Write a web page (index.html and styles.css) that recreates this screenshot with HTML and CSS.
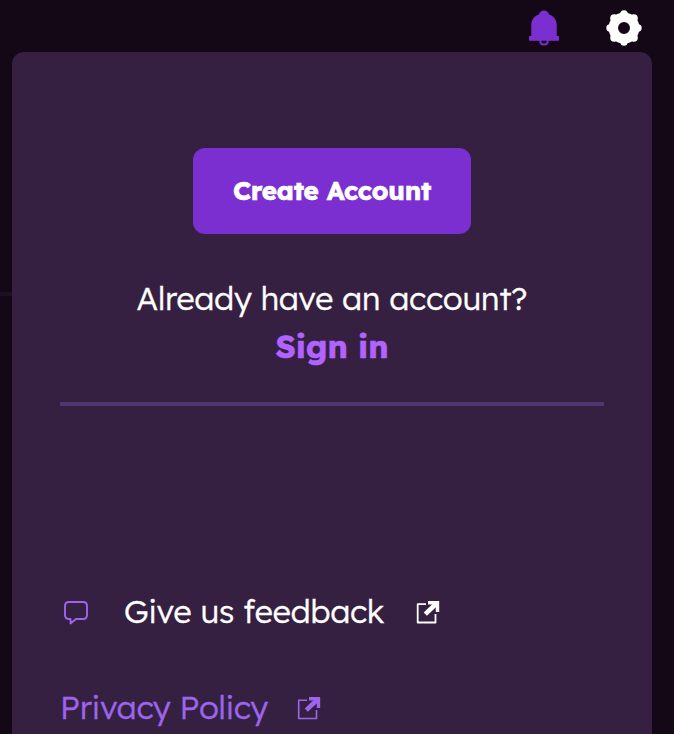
FILE: index.html
```html
<!DOCTYPE html>
<html lang="en">
<head>
<meta charset="utf-8">
<title>Account menu</title>
<link rel="stylesheet" href="styles.css">
</head>
<body>
<header class="topbar">
  <svg class="bell" viewBox="0 0 32 36" aria-hidden="true">
    <path fill="currentColor" d="M16 .5c2.900 0 4.600 1.700 5 4C26 6 28.700 10 28.700 15v11H31v4.800H1V26h2.300V15c0-5 2.700-9 7.700-10.500.4-2.300 2.100-4 5-4z"/>
    <path fill="none" stroke="currentColor" stroke-width="2" d="M12 30c0 3 1.500 4.500 4 4.500s4-1.500 4-4.500"/>
  </svg>
  <svg class="gear" viewBox="0 0 36 36" aria-hidden="true">
    <circle cx="18" cy="18" r="10.700" fill="none" stroke="currentColor" stroke-width="9.400"/>
    <g fill="currentColor"><circle cx="18" cy="4" r="3.700"/><circle cx="27.800" cy="8.200" r="4"/><circle cx="32" cy="18" r="3.700"/><circle cx="27.800" cy="27.800" r="4"/><circle cx="18" cy="32" r="3.700"/><circle cx="8.200" cy="27.800" r="4"/><circle cx="4" cy="18" r="3.700"/><circle cx="8.200" cy="8.200" r="4"/></g>
  </svg>
</header>
<main class="panel">
  <section class="account">
    <button class="create"><span>Create Account</span></button>
    <p class="question">Already have an account?</p>
    <a class="signin">Sign in</a>
  </section>
  <nav class="links">
    <a class="link feedback">
      <svg class="bubble" viewBox="0 0 26 26" aria-hidden="true"><path fill="none" stroke="currentColor" stroke-width="1.900" stroke-linejoin="round" d="M6 2h14q4 0 4 4v9q0 4-4 4h-7L7.500 23.500V19H6q-4 0-4-4V6q0-4 4-4z"/></svg>
      <span class="feedback-text">Give us feedback</span>
      <svg class="external" viewBox="0 0 24 24" aria-hidden="true"><path fill="none" stroke="currentColor" stroke-width="1.800" stroke-linejoin="round" d="M10 4.200H1.700v18.300H19.500V14"/><path fill="none" stroke="currentColor" stroke-width="3.400" d="M12 2.700h9.500v9.300"/><path stroke="currentColor" stroke-width="4.600" d="M9.300 14.200L20.500 3.500"/></svg>
    </a>
    <a class="link privacy">
      <span class="privacy-text">Privacy Policy</span>
      <svg class="external" viewBox="0 0 24 24" aria-hidden="true"><path fill="none" stroke="currentColor" stroke-width="1.600" stroke-linejoin="round" d="M10 4.200H1.700v18.300H19.500V14"/><path fill="none" stroke="currentColor" stroke-width="3.400" d="M12 2.700h9.500v9.300"/><path stroke="currentColor" stroke-width="4.600" d="M9.300 14.200L20.500 3.500"/></svg>
    </a>
  </nav>
</main>
</body>
</html>
```
FILE: styles.css
```css
* { box-sizing: border-box; }
body {
  margin: 0;
  height: 734px;
  overflow: hidden;
  background: linear-gradient(#1c1020, #1c1020) 0 292px / 12px 4px no-repeat, #140817;
  color: #fff;
  font-family: Lexend, Lato, sans-serif;
  -webkit-text-stroke: 0.4px currentColor;
}
.topbar {
  display: flex;
  justify-content: flex-end;
  align-items: flex-start;
  gap: 46px;
  height: 52px;
  padding: 10px 32px 0 0;
}
.bell { width: 32px; height: 36px; color: #7b2fd0; }
.gear { width: 36px; height: 36px; }
.panel {
  width: 640px;
  height: 700px;
  margin-left: 12px;
  padding: 96px 48px 0;
  border-radius: 12px;
  background: #362041;
}
.account {
  display: flex;
  flex-direction: column;
  align-items: center;
  width: 544px;
  height: 258px;
  border-bottom: 4px solid #52376f;
}
.create {
  width: 278px;
  height: 86px;
  padding: 0;
  border: 0;
  border-radius: 12px;
  background: #7b2fd0;
  color: #fff;
  font: 700 26px/86px Lexend, Lato, sans-serif;
  letter-spacing: -0.25px;
  -webkit-text-stroke: 0.6px currentColor;
  white-space: nowrap;
}
.question {
  margin: 40px 0 0;
  font-size: 32px;
  font-weight: 300;
  line-height: 48px;
  white-space: nowrap;
}
.signin {
  color: #b262ff;
  font-size: 32px;
  font-weight: 700;
  line-height: 48px;
  -webkit-text-stroke: 0.6px currentColor;
}
.links { padding-top: 182px; }
.link {
  display: flex;
  align-items: center;
  height: 48px;
  font-size: 32px;
  font-weight: 300;
  line-height: 46px;
  white-space: nowrap;
}
.bubble { width: 26px; height: 26px; margin: 2px 35px 0 3px; color: #9d65ed; }
.feedback-text { width: 292px; }
.external { width: 24px; height: 24px; }
.feedback-text, .privacy-text { height: 48px; }
.privacy { margin-top: 48px; color: #9d65ed; }
.privacy-text { width: 237px; }
```
